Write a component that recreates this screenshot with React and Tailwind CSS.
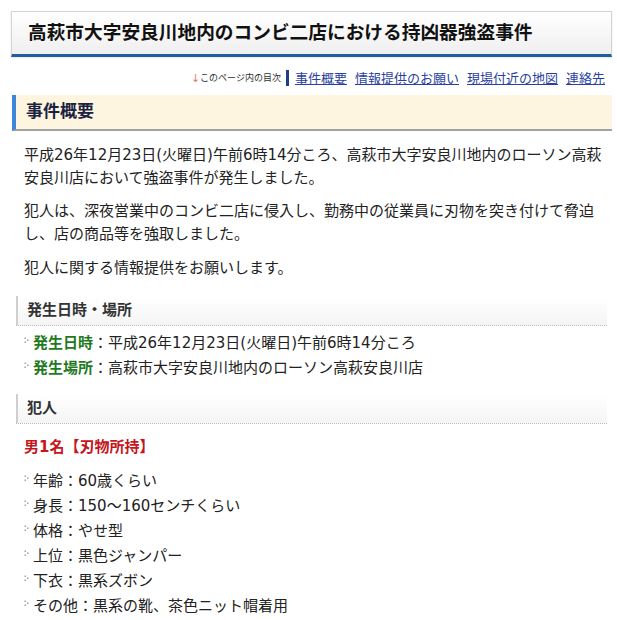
import React from "react";

const font = { fontFamily: '"DejaVu Sans", "Noto Sans CJK JP", sans-serif' };

function Bullet() {
  return (
    <svg width="6" height="7" viewBox="0 0 6 7" className="shrink-0 mt-[6px] mr-[3px]">
      <rect x="0.5" y="0.5" width="1.5" height="1.5" fill="#8fa8c0" />
      <rect x="3" y="2.5" width="1.5" height="1.5" fill="#8fa8c0" />
      <rect x="0.5" y="4.5" width="1.5" height="1.5" fill="#8fa8c0" />
    </svg>
  );
}

function Item({ label, value, green }) {
  return (
    <div className="flex items-start h-[25px] leading-[25px] text-[15px] text-[#222] whitespace-nowrap">
      <Bullet />
      <span className={green ? "font-bold text-[#1f7a1f]" : ""}>{label}</span>
      <span>：{value}</span>
    </div>
  );
}

function SubHeader({ children }) {
  return (
    <div className="mx-[5px] h-[30px] border-b border-dotted border-b-[#b8b8b8] bg-gradient-to-b from-white to-[#f5f5f5] flex items-stretch text-[15px] font-bold text-[#333]">
      <div className="w-[2px] bg-[#cfcfcf]"></div>
      <div className="flex items-center pl-[9px]">{children}</div>
    </div>
  );
}

export default function App() {
  return (
    <div className="w-[617px] h-[620px] bg-white overflow-hidden" style={font}>
      <div className="ml-[11px] w-[601px] pt-[11px]">
        {/* Title */}
        <div className="h-[46px] border border-[#d4d4d4] border-b-[3px] border-b-[#215d9c] bg-gradient-to-b from-white to-[#efefef] flex items-center pl-[16px] shadow-[0_1px_2px_rgba(0,0,0,0.1)]">
          <h1 className="text-[18.7px] font-bold text-[#111] whitespace-nowrap">
            高萩市大字安良川地内のコンビ二店における持凶器強盗事件
          </h1>
        </div>

        {/* TOC */}
        <div className="mt-[13px] h-[16px] flex items-center justify-end pr-[7px] whitespace-nowrap">
          <span className="text-[#e07b7b] text-[11px] leading-none">↓</span>
          <span className="text-[9px] text-[#333] leading-none mr-[5px]">このページ内の目次</span>
          <span className="w-[3px] h-[16px] bg-[#1d3f8a] mr-[6px]"></span>
          <div className="flex gap-[8px] text-[13px] text-[#2a3fa0] leading-none">
            <a className="underline">事件概要</a>
            <a className="underline">情報提供のお願い</a>
            <a className="underline">現場付近の地図</a>
            <a className="underline">連絡先</a>
          </div>
        </div>

        {/* Section header */}
        <div className="mt-[9px] ml-[1px] h-[36px] border-l-4 border-l-[#3f84d8] border-b-2 border-b-[#a3a3a3] bg-[#fef5e1] flex items-center pl-[10px]">
          <h2 className="text-[17px] font-bold text-[#1b2340]">事件概要</h2>
        </div>

        <div className="px-[13px] text-[15px] leading-[23px] text-[#222] whitespace-nowrap">
          <p className="mt-[13px]">
            平成26年12月23日(火曜日)午前6時14分ころ、高萩市大字安良川地内のローソン高萩
            <br />
            安良川店において強盗事件が発生しました。
          </p>
          <p className="mt-[10px]">
            犯人は、深夜営業中のコンビ二店に侵入し、勤務中の従業員に刃物を突き付けて脅迫
            <br />
            し、店の商品等を強取しました。
          </p>
          <p className="mt-[11px]">犯人に関する情報提供をお願いします。</p>
        </div>

        <div className="mt-[16px]">
          <SubHeader>発生日時・場所</SubHeader>
        </div>
        <div className="mt-[5px] pl-[13px]">
          <Item green label="発生日時" value="平成26年12月23日(火曜日)午前6時14分ころ" />
          <Item green label="発生場所" value="高萩市大字安良川地内のローソン高萩安良川店" />
        </div>

        <div className="mt-[13px]">
          <SubHeader>犯人</SubHeader>
        </div>
        <div className="mt-[11px] pl-[13px] h-[25px] leading-[25px] text-[15px] font-bold text-[#c4161c]">
          男1名【刃物所持】
        </div>
        <div className="mt-[9px] pl-[13px]">
          <Item label="年齢" value="60歳くらい" />
          <Item label="身長" value="150～160センチくらい" />
          <Item label="体格" value="やせ型" />
          <Item label="上位" value="黒色ジャンパー" />
          <Item label="下衣" value="黒系ズボン" />
          <Item label="その他" value="黒系の靴、茶色ニット帽着用" />
        </div>
      </div>
    </div>
  );
}
